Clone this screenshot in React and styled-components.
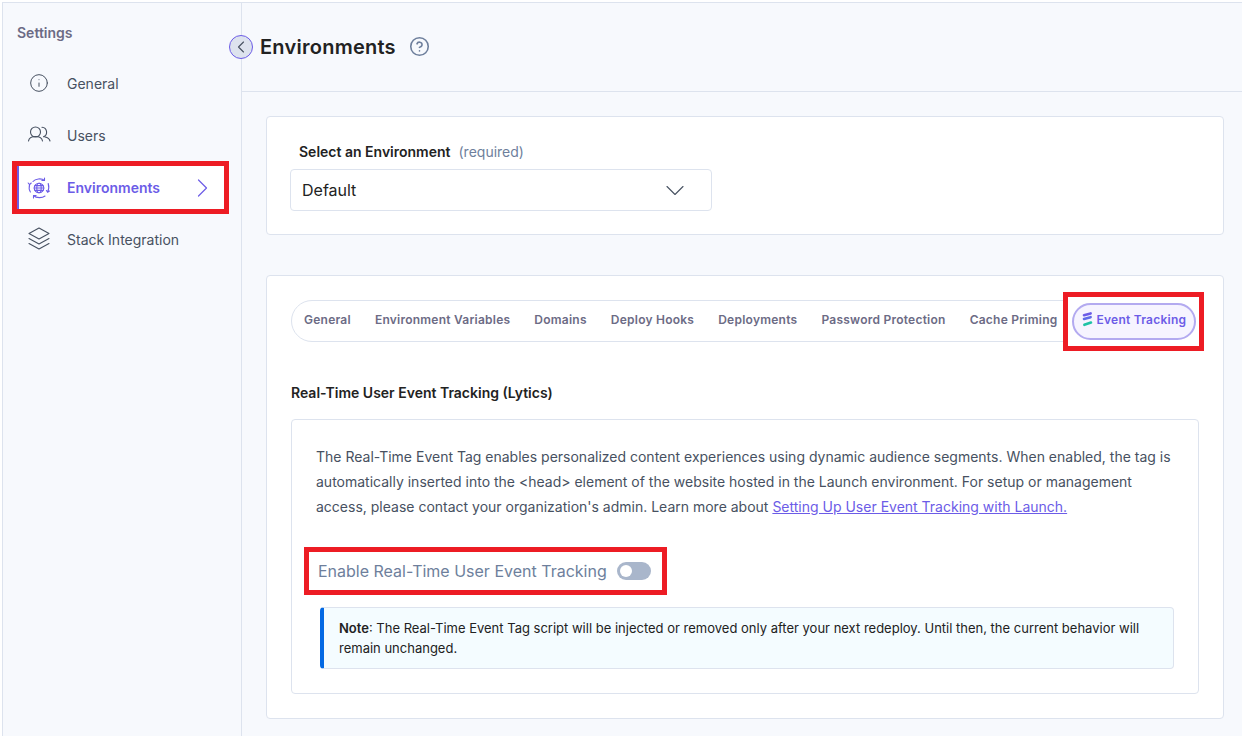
import React from "react";
import styled, { createGlobalStyle } from "styled-components";
import { Info, CircleHelp } from "lucide-react";

const GlobalStyle = createGlobalStyle`
  html, body {
    margin: 0;
    padding: 0;
    background: #fff;
  }
  body {
    font-family: "Inter", "Liberation Sans", sans-serif;
    overflow: hidden;
  }
  * {
    box-sizing: border-box;
  }
`;

const Page = styled.div`
  position: relative;
  display: flex;
  height: 734px;
  margin: 2px 0 0 2px;
  border-top: 1px solid #dde3ee;
  border-left: 1px solid #dde3ee;
  background: #f7f9fd;
  overflow: hidden;
`;

const Sidebar = styled.aside`
  position: relative;
  flex: 0 0 239px;
  padding-top: 21px;
  border-right: 1px solid #dde3ee;
`;

const SidebarTitle = styled.div`
  height: 33px;
  padding-left: 14px;
  font-size: 14px;
  font-weight: 600;
  line-height: 18px;
  color: #6c6b85;
`;

const NavRow = styled.div`
  position: relative;
  display: flex;
  align-items: center;
  width: ${(p) => (p.$active ? "207px" : "auto")};
  height: ${(p) => (p.$active ? "43px" : "52px")};
  margin: ${(p) => (p.$active ? "5px 0 4px 14px" : "0")};
  padding-left: ${(p) => (p.$active ? "8px" : "24px")};
  border-left: ${(p) => (p.$active ? "2px solid #6c5ce7" : "none")};
  background: ${(p) => (p.$active ? "#fff" : "transparent")};
  color: ${(p) => (p.$active ? "#6c5ce7" : "#475161")};
  font-size: 14px;
  font-weight: ${(p) => (p.$active ? 600 : 400)};
  outline: ${(p) => (p.$active ? "5px solid #ed1c24" : "none")};
`;

const NavIcon = styled.span`
  display: flex;
  justify-content: center;
  align-items: center;
  flex: 0 0 24px;
  width: 24px;
  height: 24px;
  margin-right: 16px;
`;

const NavChevron = styled.span`
  position: absolute;
  right: 16px;
  top: 13px;
  display: flex;
`;

const CollapseButton = styled.button`
  position: absolute;
  top: 32px;
  left: 226px;
  z-index: 2;
  display: flex;
  align-items: center;
  justify-content: center;
  width: 24px;
  height: 24px;
  padding: 0;
  border: 1px solid #6c5ce7;
  border-radius: 50%;
  background: #dde3ee;
`;

const Main = styled.main`
  flex: 1;
  min-width: 0;
`;

const Header = styled.header`
  display: flex;
  align-items: center;
  height: 89px;
  padding: 0 0 1px 18px;
  border-bottom: 1px solid #dde3ee;
`;

const Heading = styled.h1`
  margin: 0 13px 0 0;
  font-size: 20px;
  font-weight: 600;
  line-height: 1;
  letter-spacing: 0.25px;
  color: #222;
`;

const Content = styled.div`
  padding: 24px 18px 0 24px;
`;

const Card = styled.section`
  margin-bottom: 40px;
  border: 1px solid #dde3ee;
  border-radius: 4px;
  background: #fff;
`;

const EnvCard = styled(Card)`
  height: 119px;
  padding: 26px 23px 0;
`;

const FieldLabel = styled.div`
  margin: 0 0 9px 9px;
  font-size: 14px;
  line-height: 17px;
  font-weight: 600;
  color: #222;
`;

const Required = styled.span`
  margin-left: 8px;
  font-weight: 400;
  color: #6e7f9c;
`;

const SelectBox = styled.div`
  display: flex;
  align-items: center;
  justify-content: space-between;
  width: 422px;
  height: 42px;
  padding: 0 27px 0 11px;
  border: 1px solid #dde3ee;
  border-radius: 4px;
  font-size: 16px;
  color: #222;
`;

const TabsCard = styled(Card)`
  height: 444px;
  padding: 24px 24px 0;
`;

const TabBar = styled.div`
  display: flex;
  align-items: center;
  height: 42px;
  padding-left: 12px;
  gap: 24px;
  border: 1px solid #dde3ee;
  border-radius: 21px;
`;

const Tab = styled.div`
  margin-bottom: 3px;
  font-size: 12px;
  font-weight: 600;
  letter-spacing: 0.24px;
  color: #6c6b85;
  white-space: nowrap;
`;

const TabHighlight = styled.div`
  flex: 0 0 131px;
  display: flex;
  align-items: center;
  height: 49px;
  margin-left: -14px;
  padding-left: 4px;
  background: #fff;
  outline: 5px solid #ed1c24;
`;

const ActiveTab = styled.div`
  display: flex;
  align-items: center;
  gap: 4px;
  width: 124px;
  height: 37px;
  padding: 0 0 3px 8px;
  border: 2px solid #b3aaf0;
  border-radius: 19px;
  background: #f6f4ff;
  color: #6c5ce7;
  font-size: 12px;
  font-weight: 600;
  letter-spacing: 0.24px;
  white-space: nowrap;
`;

const SectionTitle = styled.h2`
  margin: 42px 0 17px;
  font-size: 14px;
  font-weight: 600;
  line-height: 18px;
  color: #222;
`;

const InnerBox = styled.div`
  height: 275px;
  padding: 24px 24px 0;
  border: 1px solid #dde3ee;
  border-radius: 4px;
`;

const Description = styled.p`
  margin: 0;
  font-size: 14px;
  line-height: 25px;
  color: #475161;

  a {
    color: #6c5ce7;
    text-decoration: underline;
  }
`;

const ToggleRow = styled.div`
  display: flex;
  align-items: center;
  gap: 10px;
  width: 353px;
  height: 38px;
  margin: 33px 0 0 -7px;
  padding-left: 9px;
  font-size: 16px;
  color: #6e7f9c;
  outline: 5px solid #ed1c24;
`;

const ToggleTrack = styled.span`
  display: flex;
  align-items: center;
  width: 34px;
  height: 18px;
  padding-left: 3px;
  border-radius: 9px;
  background: #a9b6cb;
`;

const ToggleKnob = styled.span`
  width: 12px;
  height: 12px;
  border-radius: 50%;
  background: #fff;
`;

const Note = styled.div`
  margin: 17px 0 0 4px;
  width: 854px;
  height: 62px;
  padding: 10px 16px 0 15px;
  border: 1px solid #dde3ee;
  border-left: 4px solid #0469e3;
  border-radius: 4px;
  background: #f4fcff;
  font-size: 13px;
  line-height: 20px;
  color: #222;

  b {
    font-weight: 600;
  }
`;

const Chevron = ({ width, height, d, color = "#475161", strokeWidth = 1.1 }) => (
  <svg width={width} height={height} viewBox={`0 0 ${width} ${height}`} fill="none" stroke={color} strokeWidth={strokeWidth} strokeLinecap="round" strokeLinejoin="round">
    <path d={d} />
  </svg>
);

const EnvironmentsIcon = () => (
  <svg width="24" height="24" viewBox="0 0 24 24" fill="none" stroke="#6c5ce7" strokeWidth="1.1" strokeLinecap="round" strokeLinejoin="round">
    <circle cx="12" cy="12" r="4.8" />
    <ellipse cx="12" cy="12" rx="2.2" ry="4.8" />
    <path d="M7.2 12h9.6M7.9 9.6h8.2M7.9 14.4h8.2" />
    <path d="M6 5.5C8 2.8 14.5 1.8 17.5 4.5M17.5 4.5V2M17.5 4.5h-2.6" />
    <path d="M18 20c-2.4 2-8.5 2.6-11.5-.5M6.5 19.5V22M6.5 19.5h2.6" />
    <path d="M2.6 8.5C1.9 11 2.1 14 3.4 16M1.2 7l1.4 1.6L4.2 7" />
    <path d="M21.2 7.5c.8 2.6.7 6-.6 8.5M19.4 14.5l1.2 1.8 1.8-1.3" />
  </svg>
);

const UsersIcon = () => (
  <svg width="24" height="24" viewBox="0 0 24 24" fill="none" stroke="#475161" strokeWidth="1.1" strokeLinecap="round" strokeLinejoin="round">
    <circle cx="8.5" cy="9" r="5" />
    <path d="M1.5 18c.5-3 3.5-4.5 7-4.5s6.5 1.5 7 4.5" />
    <path d="M15 4.2a5 5 0 0 1 1.5 9.6M18 14c2.5.5 4.5 2 5 4" />
  </svg>
);

const StackIcon = () => (
  <svg width="24" height="24" viewBox="0 0 24 24" fill="none" stroke="#475161" strokeWidth="1.1" strokeLinecap="round" strokeLinejoin="round">
    <path d="M12 1 2 6.5 12 12l10-5.5Z" />
    <path d="m2 11.5 10 5.5 10-5.5" />
    <path d="m2 16.5 10 5.5 10-5.5" />
  </svg>
);

const EventTrackingIcon = () => (
  <svg width="11" height="15" viewBox="0 0 11 15" fill="none" strokeWidth="2.6" strokeLinecap="round">
    <path d="M2 3.2 8.6 1.4" stroke="#6c5ce7" />
    <path d="M2 7 8.6 5.2" stroke="#5f6be8" />
    <path d="M2.4 12.8 9 10.6" stroke="#1fc3a5" />
  </svg>
);

const tabs = [
  "General",
  "Environment Variables",
  "Domains",
  "Deploy Hooks",
  "Deployments",
  "Password Protection",
  "Cache Priming",
];

export default function App() {
  return (
    <>
      <GlobalStyle />
      <Page>
        <Sidebar>
          <SidebarTitle>Settings</SidebarTitle>
          <NavRow>
            <NavIcon>
              <Info size={20} strokeWidth={1.2} />
            </NavIcon>
            General
          </NavRow>
          <NavRow>
            <NavIcon>
              <UsersIcon />
            </NavIcon>
            Users
          </NavRow>
          <NavRow $active>
            <NavIcon>
              <EnvironmentsIcon />
            </NavIcon>
            Environments
            <NavChevron>
              <Chevron width={11} height={18} d="M1.5 1 9.5 9l-8 8" color="#6c5ce7" strokeWidth={1.2} />
            </NavChevron>
          </NavRow>
          <NavRow>
            <NavIcon>
              <StackIcon />
            </NavIcon>
            Stack Integration
          </NavRow>
        </Sidebar>
        <CollapseButton>
          <Chevron width={8} height={12} d="M6.5 1 1.5 6l5 5" />
        </CollapseButton>
        <Main>
          <Header>
            <Heading>Environments</Heading>
            <CircleHelp size={21} strokeWidth={1.8} color="#6e7f9c" />
          </Header>
          <Content>
            <EnvCard>
              <FieldLabel>
                Select an Environment<Required>(required)</Required>
              </FieldLabel>
              <SelectBox>
                Default
                <Chevron width={18} height={11} d="M1 1.5 9 9.5l8-8" />
              </SelectBox>
            </EnvCard>
            <TabsCard>
              <TabBar>
                {tabs.map((t) => (
                  <Tab key={t}>{t}</Tab>
                ))}
                <TabHighlight>
                  <ActiveTab>
                    <EventTrackingIcon />
                    Event Tracking
                  </ActiveTab>
                </TabHighlight>
              </TabBar>
              <SectionTitle>Real-Time User Event Tracking (Lytics)</SectionTitle>
              <InnerBox>
                <Description>
                  The Real-Time Event Tag enables personalized content experiences using dynamic audience segments. When enabled, the tag is automatically inserted into the &lt;head&gt; element of the website hosted in the Launch environment. For setup or management access, please contact your organization's admin. Learn more about{" "}
                  <a href="#setup">Setting Up User Event Tracking with Launch.</a>
                </Description>
                <ToggleRow>
                  Enable Real-Time User Event Tracking
                  <ToggleTrack>
                    <ToggleKnob />
                  </ToggleTrack>
                </ToggleRow>
                <Note>
                  <b>Note</b>: The Real-Time Event Tag script will be injected or removed only after your next redeploy. Until then, the current behavior will remain unchanged.
                </Note>
              </InnerBox>
            </TabsCard>
          </Content>
        </Main>
      </Page>
    </>
  );
}
